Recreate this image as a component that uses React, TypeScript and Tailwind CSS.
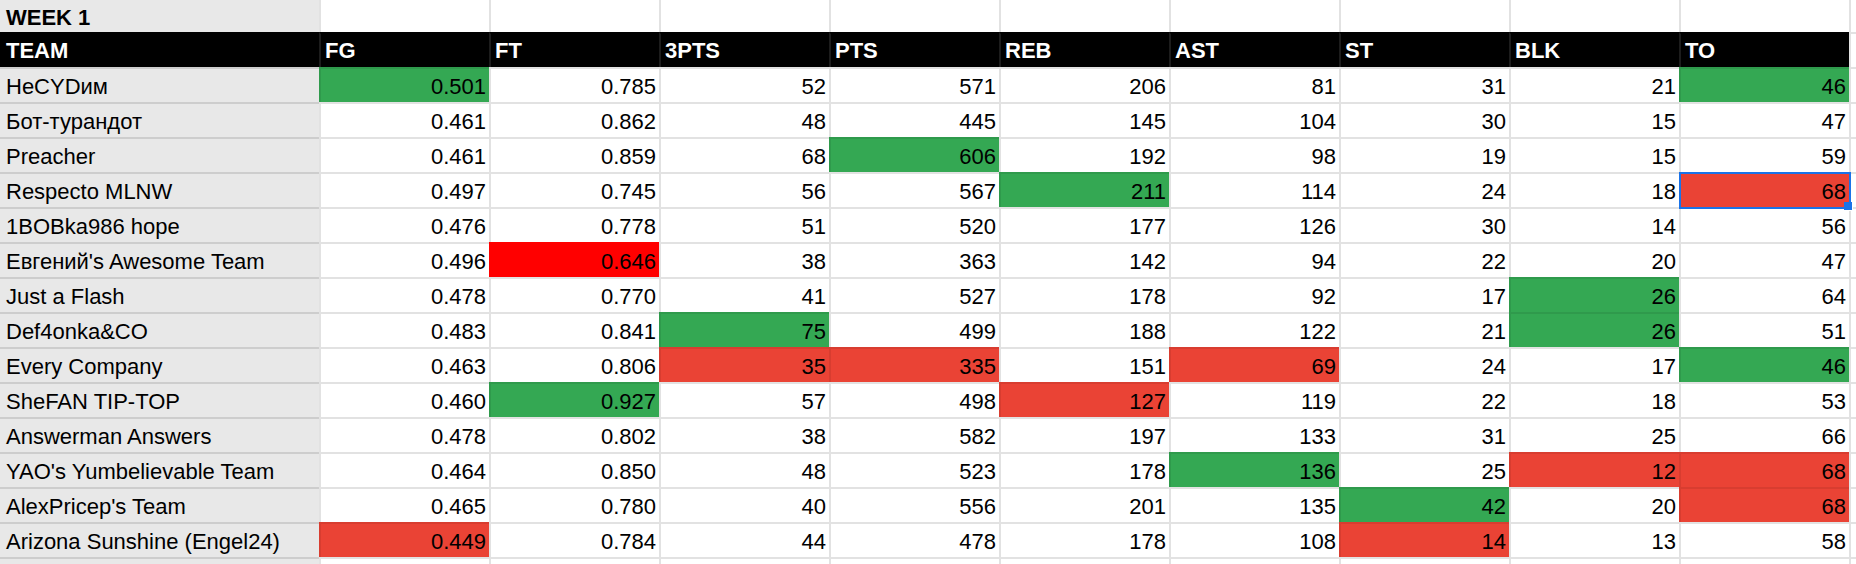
import React from "react";

type Mark = "g" | "r" | "R";

const headers = ["TEAM", "FG", "FT", "3PTS", "PTS", "REB", "AST", "ST", "BLK", "TO"];

// name, stats, highlighted cells (index into stats)
const rows: [string, string[], Record<number, Mark>][] = [
  ["HeCYDим", ["0.501", "0.785", "52", "571", "206", "81", "31", "21", "46"], { 0: "g", 8: "g" }],
  ["Бот-турандот", ["0.461", "0.862", "48", "445", "145", "104", "30", "15", "47"], {}],
  ["Preacher", ["0.461", "0.859", "68", "606", "192", "98", "19", "15", "59"], { 3: "g" }],
  ["Respecto MLNW", ["0.497", "0.745", "56", "567", "211", "114", "24", "18", "68"], { 4: "g", 8: "r" }],
  ["1BOBka986 hope", ["0.476", "0.778", "51", "520", "177", "126", "30", "14", "56"], {}],
  ["Евгений's Awesome Team", ["0.496", "0.646", "38", "363", "142", "94", "22", "20", "47"], { 1: "R" }],
  ["Just a Flash", ["0.478", "0.770", "41", "527", "178", "92", "17", "26", "64"], { 7: "g" }],
  ["Def4onka&CO", ["0.483", "0.841", "75", "499", "188", "122", "21", "26", "51"], { 2: "g", 7: "g" }],
  ["Every Company", ["0.463", "0.806", "35", "335", "151", "69", "24", "17", "46"], { 2: "r", 3: "r", 5: "r", 8: "g" }],
  ["SheFAN TIP-TOP", ["0.460", "0.927", "57", "498", "127", "119", "22", "18", "53"], { 1: "g", 4: "r" }],
  ["Answerman Answers", ["0.478", "0.802", "38", "582", "197", "133", "31", "25", "66"], {}],
  ["YAO's Yumbelievable Team", ["0.464", "0.850", "48", "523", "178", "136", "25", "12", "68"], { 5: "g", 7: "r", 8: "r" }],
  ["AlexPricep's Team", ["0.465", "0.780", "40", "556", "201", "135", "42", "20", "68"], { 6: "g", 8: "r" }],
  ["Arizona Sunshine (Engel24)", ["0.449", "0.784", "44", "478", "178", "108", "14", "13", "58"], { 0: "r", 6: "r" }],
];

const fills: Record<Mark, string> = {
  g: "bg-[#34a853] border-[#2f9a4c]",
  r: "bg-[#ea4335] border-[#d83d30]",
  R: "bg-[#ff0000] border-[#ff0000]",
};

function StatCell({ value, mark, selected }: { value: string; mark?: Mark; selected?: boolean }) {
  return (
    <div
      className={`relative flex h-[35px] items-end justify-end border-l-2 border-t-2 pb-[3px] pr-[3px] leading-[25px] ${
        mark ? fills[mark] : "border-[#e2e2e2] bg-white"
      }`}
    >
      {value}
      {selected && (
        <>
          <div className="pointer-events-none absolute -left-[2px] -top-[2px] -right-[2px] -bottom-[2px] z-10 border-2 border-[#1a73e8]" />
          <div className="absolute -right-[4px] -bottom-[4px] z-20 h-[8px] w-[8px] border-r border-b border-white bg-[#1a73e8] box-content" />
        </>
      )}
    </div>
  );
}

export default function App() {
  return (
    <div className="h-[564px] w-full overflow-hidden bg-white font-['Liberation_Sans',Arial,sans-serif] text-[22px] text-black">
      <div className="grid grid-cols-[319px_repeat(9,170px)_1fr]">
        {/* week title row */}
        <div className="flex h-[32px] items-end bg-[#e8e8e8] pb-[2px] pl-[6px] font-bold leading-[25px]">
          WEEK 1
        </div>
        {headers.slice(1).map((h) => (
          <div key={h} className="h-[32px] border-l-2 border-[#e2e2e2] bg-white" />
        ))}
        <div className="h-[32px] border-l-2 border-[#e2e2e2]" />

        {/* header row */}
        {headers.map((h, i) => (
          <div
            key={h}
            className={`flex h-[35px] items-end border-t-2 border-black bg-black pb-[4px] font-bold leading-[25px] text-white ${
              i === 0 ? "pl-[6px]" : "border-l-2 border-l-[#1c1c1c] pl-[4px]"
            }`}
          >
            {h}
          </div>
        ))}
        <div className="h-[35px] border-l-2 border-t-2 border-[#e2e2e2]" />

        {/* data rows */}
        {rows.map(([name, stats, marks], r) => (
          <React.Fragment key={name}>
            <div className="flex h-[35px] items-end border-t-2 border-[#cdcdcd] bg-[#e8e8e8] pb-[3px] pl-[6px] leading-[25px]">
              {name}
            </div>
            {stats.map((v, c) => (
              <StatCell key={c} value={v} mark={marks[c]} selected={r === 3 && c === 8} />
            ))}
            <div className="h-[35px] border-l-2 border-t-2 border-[#e2e2e2]" />
          </React.Fragment>
        ))}

        {/* partial row at the bottom edge */}
        <div className="h-[35px] border-t-2 border-[#cdcdcd] bg-[#e8e8e8]" />
        {headers.slice(1).map((h) => (
          <div key={h} className="h-[35px] border-l-2 border-t-2 border-[#e2e2e2]" />
        ))}
        <div className="h-[35px] border-l-2 border-t-2 border-[#e2e2e2]" />
      </div>
    </div>
  );
}
